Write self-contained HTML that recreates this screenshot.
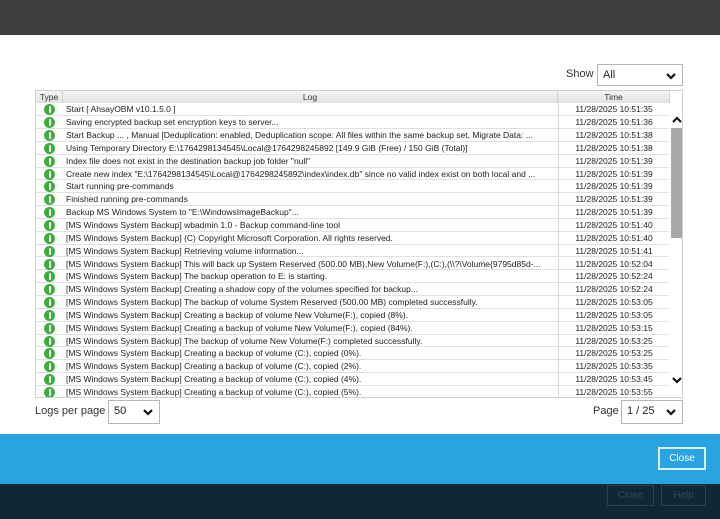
<!DOCTYPE html><html><head><style>
*{margin:0;padding:0;box-sizing:border-box}
body{width:720px;height:519px;overflow:hidden;background:#fff;font-family:"Liberation Sans",sans-serif;position:relative}
.top{position:absolute;left:0;top:0;width:720px;height:35px;background:#3d3d3d}
.blue{position:absolute;left:0;top:434px;width:720px;height:50px;background:#29a4e1}
.navy{position:absolute;left:0;top:484px;width:720px;height:35px;background:#0e2836}
.sel{position:absolute;border:1px solid #b5b5b5;background:#fff;font-size:11px;color:#222;padding:4px 5px}
.sel svg{position:absolute;right:6px;top:8px}
.lbl{position:absolute;font-size:11px;color:#333}
.tbl{position:absolute;left:35px;top:90px;width:648px;height:308px;border:1px solid #cfcfcf;overflow:hidden}
.hd{position:absolute;top:0;height:12px;background:linear-gradient(#f4f4f4,#e2e2e2);font-size:8.5px;color:#333;text-align:center;line-height:12px;border-right:1px solid #cfcfcf}
.row{position:absolute;left:0;width:633px;height:12.85px;border-bottom:1px solid #e0e0e0;font-size:8.5px;color:#222;line-height:13px}
.row .ic{position:absolute;left:8px;top:1px;width:11px;height:11px;border-radius:50%;background:#3cae3a}
.row .ic:after{content:"";position:absolute;left:4.5px;top:2px;width:2px;height:7px;background:#fff;border-radius:1px}
.row .lg{position:absolute;left:30px;width:490px;white-space:nowrap;overflow:hidden}
.row .tm{position:absolute;left:522px;width:111px;text-align:center;border-left:1px solid #d6d6d6;height:12.85px}
.sb{position:absolute;left:634px;top:12px;width:13px;height:296px;background:#fff}
.thumb{position:absolute;left:635px;top:37px;width:12px;height:110px;background:#a9a9a9}
.btn{position:absolute;border:2px solid #d8eef9;color:#fff;font-size:10px;text-align:center}
.btn2{position:absolute;border:1px solid #26404d;color:#2f4a58;font-size:10px;text-align:center;line-height:19px}
</style></head><body>
<div class="top"></div>
<div class="lbl" style="left:566px;top:68px">Show</div>
<div class="sel" style="left:597px;top:64px;width:86px;height:22px">All<svg width="10" height="7" viewBox="0 0 10 7"><path d="M1 1l4 4 4-4" stroke="#111" stroke-width="2.2" fill="none"/></svg></div>
<div class="tbl">
<div class="hd" style="left:0;width:27px">Type</div>
<div class="hd" style="left:27px;width:495px">Log</div>
<div class="hd" style="left:522px;width:112px">Time</div>
<div id="rows"></div>
<div class="sb"></div>
<div class="thumb"></div>
<svg style="position:absolute;left:636px;top:25px" width="10" height="7" viewBox="0 0 10 7"><path d="M1 6l4-4 4 4" stroke="#111" stroke-width="2.2" fill="none"/></svg>
<svg style="position:absolute;left:636px;top:286px" width="10" height="7" viewBox="0 0 10 7"><path d="M1 1l4 4 4-4" stroke="#111" stroke-width="2.2" fill="none"/></svg>
</div>
<div class="lbl" style="left:35px;top:405px">Logs per page</div>
<div class="sel" style="left:108px;top:400px;width:52px;height:24px">50<svg width="10" height="7" viewBox="0 0 10 7"><path d="M1 1l4 4 4-4" stroke="#111" stroke-width="2.2" fill="none"/></svg></div>
<div class="lbl" style="left:593px;top:405px">Page</div>
<div class="sel" style="left:621px;top:400px;width:62px;height:24px">1 / 25<svg width="10" height="7" viewBox="0 0 10 7"><path d="M1 1l4 4 4-4" stroke="#111" stroke-width="2.2" fill="none"/></svg></div>
<div class="blue"></div>
<div class="btn" style="left:658px;top:447px;width:48px;height:23px;line-height:19px">Close</div>
<div class="navy"></div>
<div class="btn2" style="left:607px;top:485px;width:47px;height:21px">Close</div>
<div class="btn2" style="left:661px;top:485px;width:45px;height:21px">Help</div>
<script>
var d=[["Start [ AhsayOBM v10.1.5.0 ]","10:51:35"],["Saving encrypted backup set encryption keys to server...","10:51:36"],["Start Backup ... , Manual [Deduplication: enabled, Deduplication scope: All files within the same backup set, Migrate Data: ...","10:51:38"],["Using Temporary Directory E:\\1764298134545\\Local@1764298245892 [149.9 GiB (Free) / 150 GiB (Total)]","10:51:38"],["Index file does not exist in the destination backup job folder \"null\"","10:51:39"],["Create new index \"E:\\1764298134545\\Local@1764298245892\\index\\index.db\" since no valid index exist on both local and ...","10:51:39"],["Start running pre-commands","10:51:39"],["Finished running pre-commands","10:51:39"],["Backup MS Windows System to \"E:\\WindowsImageBackup\"...","10:51:39"],["[MS Windows System Backup] wbadmin 1.0 - Backup command-line tool","10:51:40"],["[MS Windows System Backup] (C) Copyright Microsoft Corporation. All rights reserved.","10:51:40"],["[MS Windows System Backup] Retrieving volume information...","10:51:41"],["[MS Windows System Backup] This will back up System Reserved (500.00 MB),New Volume(F:),(C:),(\\\\?\\Volume{9795d85d-...","10:52:04"],["[MS Windows System Backup] The backup operation to E: is starting.","10:52:24"],["[MS Windows System Backup] Creating a shadow copy of the volumes specified for backup...","10:52:24"],["[MS Windows System Backup] The backup of volume System Reserved (500.00 MB) completed successfully.","10:53:05"],["[MS Windows System Backup] Creating a backup of volume New Volume(F:), copied (8%).","10:53:05"],["[MS Windows System Backup] Creating a backup of volume New Volume(F:), copied (84%).","10:53:15"],["[MS Windows System Backup] The backup of volume New Volume(F:) completed successfully.","10:53:25"],["[MS Windows System Backup] Creating a backup of volume (C:), copied (0%).","10:53:25"],["[MS Windows System Backup] Creating a backup of volume (C:), copied (2%).","10:53:35"],["[MS Windows System Backup] Creating a backup of volume (C:), copied (4%).","10:53:45"],["[MS Windows System Backup] Creating a backup of volume (C:), copied (5%).","10:53:55"]];
var h="";d.forEach(function(r,i){h+='<div class="row" style="top:'+(12.3+i*12.85)+'px"><div class="ic"></div><div class="lg">'+r[0].replace(/&/g,"&amp;").replace(/</g,"&lt;")+'</div><div class="tm">11/28/2025 '+r[1]+'</div></div>'});
document.getElementById("rows").innerHTML=h;
</script>
</body></html>
